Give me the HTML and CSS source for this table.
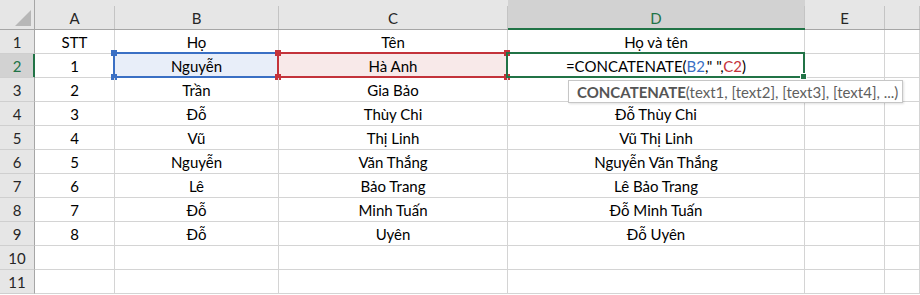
FILE: index.html
```html
<!DOCTYPE html>
<html lang="vi">
<head>
  <meta charset="UTF-8" />
  <title>Ghép họ và tên</title>
  <link rel="stylesheet" href="styles.css">
</head>
<body>
  <div class="sheet">
    <!-- column headers -->
    <div class="corner">
      <svg width="16" height="16" viewBox="0 0 16 16"><polygon points="16,0 16,16 0,16" fill="#b7b7b7"/></svg>
    </div>
    <div class="col-head">A</div>
    <div class="col-head">B</div>
    <div class="col-head">C</div>
    <div class="col-head active">D</div>
    <div class="col-head">E</div>
    <div class="col-head"></div>

    <div class="row-head">1</div>
    <div class="cell">STT</div>
    <div class="cell">Họ</div>
    <div class="cell">Tên</div>
    <div class="cell">Họ và tên</div>
    <div class="cell"></div>
    <div class="cell"></div>

    <div class="row-head active">2</div>
    <div class="cell">1</div>
    <div class="cell ref ref-b">
      Nguyễn
      <div class="ref-box">
        <span class="knob tl"></span><span class="knob tr"></span>
        <span class="knob bl"></span><span class="knob br"></span>
      </div>
    </div>
    <div class="cell ref ref-c">
      Hà Anh
      <div class="ref-box">
        <span class="knob tl"></span><span class="knob tr"></span>
        <span class="knob bl"></span><span class="knob br"></span>
      </div>
    </div>
    <div class="cell editing">
      <span>=CONCATENATE(<span class="f-b">B2</span>," ",<span class="f-c">C2</span>)</span>
      <div class="edit-box"><span class="fill-handle"></span></div>
      <div class="tip"><b>CONCATENATE</b>(text1, [text2], [text3], [text4], ...)</div>
    </div>
    <div class="cell"></div>
    <div class="cell"></div>

    <div class="row-head">3</div>
    <div class="cell">2</div>
    <div class="cell">Trần</div>
    <div class="cell">Gia Bảo</div>
    <div class="cell"></div>
    <div class="cell"></div>
    <div class="cell"></div>

    <div class="row-head">4</div>
    <div class="cell">3</div>
    <div class="cell">Đỗ</div>
    <div class="cell">Thùy Chi</div>
    <div class="cell">Đỗ Thùy Chi</div>
    <div class="cell"></div>
    <div class="cell"></div>

    <div class="row-head">5</div>
    <div class="cell">4</div>
    <div class="cell">Vũ</div>
    <div class="cell">Thị Linh</div>
    <div class="cell">Vũ Thị Linh</div>
    <div class="cell"></div>
    <div class="cell"></div>

    <div class="row-head">6</div>
    <div class="cell">5</div>
    <div class="cell">Nguyễn</div>
    <div class="cell">Văn Thắng</div>
    <div class="cell">Nguyễn Văn Thắng</div>
    <div class="cell"></div>
    <div class="cell"></div>

    <div class="row-head">7</div>
    <div class="cell">6</div>
    <div class="cell">Lê</div>
    <div class="cell">Bảo Trang</div>
    <div class="cell">Lê Bảo Trang</div>
    <div class="cell"></div>
    <div class="cell"></div>

    <div class="row-head">8</div>
    <div class="cell">7</div>
    <div class="cell">Đỗ</div>
    <div class="cell">Minh Tuấn</div>
    <div class="cell">Đỗ Minh Tuấn</div>
    <div class="cell"></div>
    <div class="cell"></div>

    <div class="row-head">9</div>
    <div class="cell">8</div>
    <div class="cell">Đỗ</div>
    <div class="cell">Uyên</div>
    <div class="cell">Đỗ Uyên</div>
    <div class="cell"></div>
    <div class="cell"></div>

    <div class="row-head">10</div>
    <div class="cell"></div>
    <div class="cell"></div>
    <div class="cell"></div>
    <div class="cell"></div>
    <div class="cell"></div>
    <div class="cell"></div>

    <div class="row-head">11</div>
    <div class="cell"></div>
    <div class="cell"></div>
    <div class="cell"></div>
    <div class="cell"></div>
    <div class="cell"></div>
    <div class="cell"></div>
  </div>
</body>
</html>
```

FILE: styles.css
```css
* {
  box-sizing: border-box;
  margin: 0;
  padding: 0;
}
body {
  font-family: Lato, "Noto Sans", sans-serif;
  font-size: 15px;
  background: #fff;
  color: #000;
  overflow: hidden;
}
.sheet {
  display: grid;
  grid-template-columns: 35px 80px 164px 229px 297px 80px 1fr;
  grid-template-rows: 30px;
  grid-auto-rows: 24px;
}

/* header strip */
.corner,
.col-head {
  background-color: #e6e6e6;
  border-bottom: 1px solid #a6a6a6;
}
.corner {
  display: flex;
  align-items: flex-end;
  justify-content: flex-end;
  padding: 0 3px 3px 0;
  border-right: 1px solid #a6a6a6;
}
.col-head {
  display: flex;
  align-items: center;
  justify-content: center;
  padding-top: 7px;
  color: #262626;
  background-image: linear-gradient(#c4c4c4, #c4c4c4);
  background-size: 1px calc(100% - 6px);
  background-position: right bottom;
  background-repeat: no-repeat;
  padding-right: 1px;
}
.col-head.active {
  background-color: #d2d2d2;
  color: #217346;
  border-bottom-color: #217346;
  box-shadow: inset 0 -1px 0 #217346;
}

.row-head {
  display: flex;
  align-items: center;
  justify-content: center;
  padding-top: 1px;
  background: #e6e6e6;
  color: #262626;
  border-right: 1px solid #a6a6a6;
  border-bottom: 1px solid #cfcfcf;
}
.row-head.active {
  background: #d2d2d2;
  color: #217346;
  border-right-color: #217346;
  box-shadow: inset -1px 0 0 #217346;
}

.cell {
  position: relative;
  display: flex;
  align-items: center;
  justify-content: center;
  padding-top: 1px;
  border-right: 1px solid #d4d4d4;
  border-bottom: 1px solid #d4d4d4;
  white-space: nowrap;
}

/* coloured range references while the formula is being typed */
.ref-b { background: #e8eef9; }
.ref-c { background: #f8e9e9; }
.ref-box {
  position: absolute;
  top: -2px;
  left: -2px;
  right: -1px;
  bottom: -1px;
  border: 2px solid;
  pointer-events: none;
}
.ref-b .ref-box { border-color: #3a6fc4; }
.ref-c .ref-box { border-color: #c4333b; }
.knob {
  position: absolute;
  width: 6px;
  height: 6px;
  background: inherit;
}
.ref-b .knob { background: #3a6fc4; }
.ref-c .knob { background: #c4333b; }
.knob.tl { top: -4px; left: -4px; }
.knob.tr { top: -4px; right: -4px; }
.knob.bl { bottom: -4px; left: -4px; }
.knob.br { bottom: -4px; right: -4px; }

.editing {
  z-index: 2;
}
.f-b { color: #3a6fc4; }
.f-c { color: #c4333b; }
.edit-box {
  position: absolute;
  top: -2px;
  left: -2px;
  right: -1px;
  bottom: -1px;
  border: 2px solid #217346;
}
.fill-handle {
  position: absolute;
  right: -4px;
  bottom: -4px;
  width: 7px;
  height: 7px;
  background: #217346;
  border: 1px solid #fff;
}

.tip {
  position: absolute;
  left: 60px;
  top: 26px;
  height: 23px;
  width: 335px;
  display: flex;
  align-items: center;
  padding: 1px 0 0 8px;
  background: #fff;
  border: 1px solid #c6c6c6;
  box-shadow: 1px 1px 2px rgba(0, 0, 0, 0.12);
  color: #5f5f5f;
  font-size: 15px;
}
.tip b {
  color: #555;
  font-weight: 700;
}
```
